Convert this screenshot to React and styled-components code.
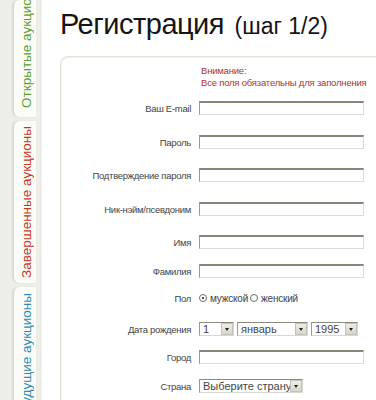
import React from "react";
import styled, { createGlobalStyle } from "styled-components";

const GlobalStyle = createGlobalStyle`
  html, body {
    margin: 0;
    padding: 0;
    background: #fff;
    overflow: hidden;
  }
  body {
    font-family: "Liberation Sans", Arial, sans-serif;
  }
`;

const Page = styled.div`
  display: flex;
  height: 400px;
  overflow: hidden;
`;

const Sidebar = styled.nav`
  flex: 0 0 42px;
  box-sizing: border-box;
  padding: 0 6px 0 13px;
  background: #eeeee8;
  display: flex;
  flex-direction: column;
  gap: 4px;
  overflow: hidden;
`;

const Tab = styled.div`
  flex: 0 0 ${({ $h }) => ($h ? `${$h}px` : "auto")};
  flex-grow: ${({ $h }) => ($h ? 0 : 1)};
  box-sizing: border-box;
  display: flex;
  justify-content: center;
  align-items: ${({ $align }) => $align || "center"};
  padding: ${({ $pad }) => $pad || "0"};
  padding-left: 3px;
  background: #fbfbf8;
  border-left: 1px solid #d6d6ce;
  border-radius: 6px 0 0 6px;
  box-shadow: -1px 0 2px rgba(0, 0, 0, 0.08);
  overflow: hidden;
`;

const TabLabel = styled.span`
  writing-mode: vertical-rl;
  transform: rotate(180deg);
  white-space: nowrap;
  font-size: 13.5px;
  line-height: 16px;
  color: ${({ $color }) => $color};
`;

const Main = styled.main`
  flex: 1;
  min-width: 0;
  padding: 4px 0 0 18px;
  overflow: hidden;
`;

const Title = styled.h1`
  margin: 0;
  font-weight: normal;
  font-size: 29px;
  letter-spacing: -0.5px;
  line-height: 40px;
  color: #151515;
  white-space: nowrap;

  small {
    margin-left: 3px;
    font-size: 23px;
    letter-spacing: 0;
  }
`;

const Card = styled.section`
  margin-top: 10px;
  width: 340px;
  box-sizing: border-box;
  border: 1px solid #e4e4da;
  border-right: none;
  border-radius: 8px 0 0 0;
  box-shadow: inset 1px 1px 0 #f3f3ee;
  padding-top: 8px;
  min-height: 400px;
`;

const Notice = styled.p`
  margin: 0 0 0 140px;
  font-size: 9.5px;
  letter-spacing: -0.2px;
  line-height: 12px;
  color: #a8381f;
  white-space: nowrap;
`;

const Row = styled.div`
  display: grid;
  grid-template-columns: 130px 1fr;
  column-gap: 8px;
  align-items: center;
  height: 14px;
  margin-top: ${({ $space }) => $space}px;
`;

const Label = styled.label`
  text-align: right;
  font-size: 9.5px;
  letter-spacing: -0.3px;
  color: #444;
  white-space: nowrap;
`;

const TextInput = styled.input`
  box-sizing: border-box;
  width: 165px;
  height: 14px;
  margin: 0;
  padding: 0 3px;
  border: 1px solid #dcdcd6;
  border-top: 2px solid #86867a;
  border-left: 1px solid #9a9a8e;
  background: #fff;
  font: 10px "Liberation Sans", Arial, sans-serif;
  outline: none;
`;

const Controls = styled.div`
  display: flex;
  align-items: center;
  gap: 3px;
  font-size: 10px;
  letter-spacing: -0.2px;
  color: #444;
`;

const Radio = styled.span`
  box-sizing: border-box;
  width: 8px;
  height: 8px;
  border-radius: 50%;
  border: 1px solid #6d6d6d;
  background: #fff;
  display: inline-flex;
  align-items: center;
  justify-content: center;

  &::after {
    content: "";
    width: 2px;
    height: 2px;
    border-radius: 50%;
    background: ${({ $checked }) => ($checked ? "#111" : "transparent")};
  }
`;

const RadioText = styled.span`
  margin-right: -1px;
`;

const Select = styled.div`
  box-sizing: border-box;
  width: ${({ $w }) => $w}px;
  height: 14px;
  display: flex;
  align-items: center;
  border: 1px solid #d8d8d2;
  border-top-color: #8a8a80;
  border-left-color: #9a9a90;
  background: #fff;
  overflow: hidden;
`;

const SelectText = styled.span`
  flex: 1;
  min-width: 0;
  padding-left: 3px;
  font-size: 11px;
  letter-spacing: 0;
  color: #444;
  white-space: nowrap;
  overflow: hidden;
`;

const SelectButton = styled.span`
  flex: 0 0 12px;
  height: 12px;
  box-sizing: border-box;
  background: linear-gradient(#eeede6, #d8d6cc);
  border: 1px solid #c4c2b8;
  display: flex;
  align-items: center;
  justify-content: center;

  &::after {
    content: "";
    border-left: 2.5px solid transparent;
    border-right: 2.5px solid transparent;
    border-top: 3px solid #222;
  }
`;

const Dropdown = ({ w, value }) => (
  <Select $w={w}>
    <SelectText>{value}</SelectText>
    <SelectButton />
  </Select>
);

const fields = [
  { label: "Ваш E-mail", space: 12 },
  { label: "Пароль", space: 20 },
  { label: "Подтверждение пароля", space: 19 },
  { label: "Ник-нэйм/псевдоним", space: 20 },
  { label: "Имя", space: 19 },
  { label: "Фамилия", space: 15 },
];

const App = () => (
  <>
    <GlobalStyle />
    <Page>
      <Sidebar>
        <Tab $h={117} $align="flex-end" $pad="0 0 9px">
          <TabLabel $color="#5a9e2a">Открытые аукционы</TabLabel>
        </Tab>
        <Tab $h={162}>
          <TabLabel $color="#c2391d">Завершенные аукционы</TabLabel>
        </Tab>
        <Tab $align="flex-start" $pad="6px 0 0">
          <TabLabel $color="#2a8cb6">Будущие аукционы</TabLabel>
        </Tab>
      </Sidebar>

      <Main>
        <Title>
          Регистрация <small>(шаг 1/2)</small>
        </Title>

        <Card>
          <Notice>
            Внимание:
            <br />
            Все поля обязательны для заполнения
          </Notice>

          {fields.map((f) => (
            <Row key={f.label} $space={f.space}>
              <Label>{f.label}</Label>
              <TextInput type="text" />
            </Row>
          ))}

          <Row $space={13}>
            <Label>Пол</Label>
            <Controls>
              <Radio $checked />
              <RadioText>мужской</RadioText>
              <Radio />
              <RadioText>женский</RadioText>
            </Controls>
          </Row>

          <Row $space={17}>
            <Label>Дата рождения</Label>
            <Controls>
              <Dropdown w={35} value="1" />
              <Dropdown w={71} value="январь" />
              <Dropdown w={47} value="1995" />
            </Controls>
          </Row>

          <Row $space={14}>
            <Label>Город</Label>
            <TextInput type="text" />
          </Row>

          <Row $space={15}>
            <Label>Страна</Label>
            <Controls>
              <Dropdown w={104} value="Выберите страну:" />
            </Controls>
          </Row>
        </Card>
      </Main>
    </Page>
  </>
);

export default App;
